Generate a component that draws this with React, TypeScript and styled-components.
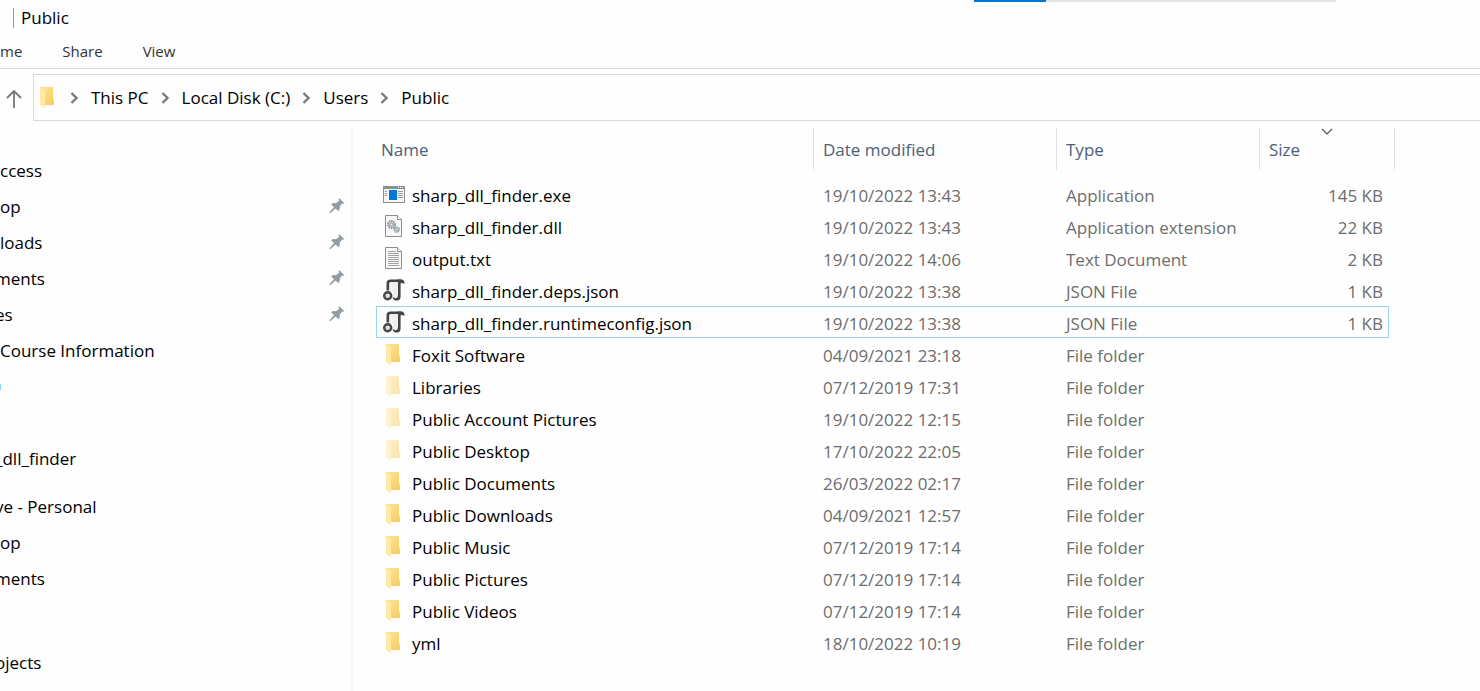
import React from "react";
import styled, { createGlobalStyle, css } from "styled-components";

const GlobalStyle = createGlobalStyle`
  *, *::before, *::after { box-sizing: border-box; }
  body {
    margin: 0;
    background: #fefefe;
    color: #000;
    font-family: "Open Sans", "Segoe UI", sans-serif;
    font-size: 17px;
    line-height: 24px;
  }
  button {
    font: inherit;
    color: inherit;
    background: none;
    border: 0;
    padding: 0;
  }
`;

const Window = styled.div`
  display: flex;
  flex-direction: column;
  min-height: 100vh;
  overflow: hidden;
`;

const ProgressStrip = styled.div`
  display: flex;
  justify-content: flex-end;
  height: 2px;
  padding-right: 144px;
`;

const ProgressTrack = styled.div`
  width: 362px;
  background: #e5e5e5;
`;

const ProgressFill = styled.div`
  width: 72px;
  height: 2px;
  background: #0078d7;
`;

const TitleBar = styled.header`
  display: flex;
  align-items: center;
  height: 32px;
  padding-left: 13px;
`;

const Title = styled.h1`
  margin: 0;
  padding-left: 7px;
  border-left: 1px solid #999;
  font-size: 17px;
  font-weight: 400;
  line-height: 20px;
`;

const Ribbon = styled.nav`
  display: flex;
  align-items: center;
  gap: 40px;
  height: 35px;
  border-bottom: 1px solid #dadbdc;
  color: #333;
  font-size: 15px;
`;

const AddressRow = styled.div`
  display: flex;
  align-items: center;
  padding-top: 5px;
`;

const UpButton = styled.button`
  display: flex;
  width: 33px;
  padding-left: 6px;
`;

const AddressBar = styled.nav`
  display: flex;
  flex: 1;
  align-items: center;
  height: 47px;
  padding-left: 6px;
  border: 1px solid #d9d9d9;
  border-right: 0;
`;

const Separator = styled.svg`
  margin: 0 12px;
`;

const Body = styled.div`
  display: flex;
  flex: 1;
  padding-top: 7px;
`;

const Sidebar = styled.nav`
  display: flex;
  flex-direction: column;
  flex: none;
  gap: 12px;
  width: 353px;
  padding: 25px 6px 0 0;
  border-right: 2px solid #f5f5f5;
`;

const NavGroup = styled.ul`
  margin: 0;
  padding: 0;
  list-style: none;
`;

const NavItem = styled.li`
  display: flex;
  align-items: center;
  justify-content: space-between;
  height: 36px;
`;

const NavLabel = styled.button<{ $clipped?: boolean }>`
  margin-left: ${(p) => (p.$clipped ? -5 : 0)}px;
`;

const Files = styled.main`
  flex: 1;
  padding-left: 23px;
`;

const Table = styled.table`
  width: 1019px;
  table-layout: fixed;
  border-collapse: separate;
  border-spacing: 0;
`;

const Column = styled.col<{ $width: number }>`
  width: ${(p) => p.$width}px;
`;

const HeadCell = styled.th<{ $first?: boolean }>`
  position: relative;
  height: 42px;
  padding: 2px 0 0 ${(p) => (p.$first ? 5 : 9)}px;
  border-right: 1px solid #e3e3e3;
  color: #4c607a;
  font-weight: 400;
  text-align: left;
`;

const SortMark = styled.svg`
  position: absolute;
  top: 0;
  left: 50%;
  transform: translateX(-50%);
`;

const Rows = styled.tbody`
  &::before {
    content: "";
    display: table-row;
    height: 8px;
  }
`;

const Cell = styled.td<{ $align?: "right" }>`
  height: 32px;
  padding: 4px 6px 0 9px;
  color: #6d6d6d;
  text-align: ${(p) => p.$align ?? "left"};
  white-space: nowrap;
`;

const NameCell = styled(Cell)`
  padding: 4px 7px 0;
  color: #000;
`;

const FileName = styled.span`
  display: flex;
  align-items: center;
  gap: 7px;
`;

const IconSlot = styled.span`
  display: flex;
  align-items: flex-start;
  width: 22px;
  height: 26px;
`;

const Row = styled.tr<{ $focused?: boolean }>`
  ${(p) =>
    p.$focused &&
    css`
      td:not(:last-child) {
        padding-top: 3px;
        border-top: 1px solid #99d1ff;
        border-bottom: 1px solid #99d1ff;
      }
      td:first-child {
        border-left: 1px solid #99d1ff;
        padding-left: 6px;
      }
      td:nth-last-child(2) {
        border-right: 1px solid #99d1ff;
        padding-right: 5px;
      }
    `}
`;

const FolderShape = ({ x = 0 }: { x?: number }) => (
  <g transform={`translate(${x} 0)`}>
    <path d="M0 0H13V11L14 13V18H4L0 17Z" fill="url(#folderBack)" />
    <path d="M0 0L5 3V21L0 18Z" fill="#ffe9a4" />
  </g>
);

const FolderIcon = () => (
  <svg width="22" height="24" viewBox="0 -1 22 24" aria-hidden="true">
    <FolderShape x={3} />
  </svg>
);

const FadedFolderIcon = () => (
  <svg width="22" height="24" viewBox="0 -1 22 24" opacity="0.5" aria-hidden="true">
    <FolderShape x={3} />
  </svg>
);

const ExeIcon = () => (
  <svg width="22" height="24" viewBox="0 0 22 24" aria-hidden="true">
    <rect x="0.5" y="3.5" width="21" height="16" fill="#f6f6f6" stroke="#8a8f92" />
    <path d="M0 3H22V6H0Z" fill="#8a8f92" />
    <path d="M15 4.5H16M17 4.5H18M19 4.5H20" stroke="#fff" />
    <rect x="6" y="7" width="8" height="10" fill="#0078d7" />
    <path d="M2 8.5H4M2 10.5H4M2 12.5H4M15 8.5H20M15 10.5H20M15 12.5H20M15 14.5H20" stroke="#999" />
  </svg>
);

const Page = () => (
  <>
    <path d="M2.5 0.5H14.5L18.5 4.5V21.5H2.5Z" fill="#f8f8f8" stroke="#8c8c8c" />
    <path d="M14.5 0.5V4.5H18.5" fill="#fff" stroke="#8c8c8c" />
  </>
);

const DllIcon = () => (
  <svg width="22" height="24" viewBox="0 0 22 24" aria-hidden="true">
    <Page />
    <circle cx="8.5" cy="9.5" r="3.6" fill="#c9d1d6" stroke="#87939a" strokeWidth="1.6" strokeDasharray="1.6 0.7" />
    <circle cx="8.5" cy="9.5" r="1.4" fill="#fff" stroke="#87939a" />
    <circle cx="13.7" cy="14.5" r="2.6" fill="#d3dadd" stroke="#87939a" strokeWidth="1.4" strokeDasharray="1.3 0.7" />
    <circle cx="13.7" cy="14.5" r="0.9" fill="#fff" stroke="#87939a" strokeWidth="0.8" />
  </svg>
);

const TextIcon = () => (
  <svg width="22" height="24" viewBox="0 0 22 24" aria-hidden="true">
    <Page />
    <path d="M5 4.5H13M5 6.5H16M5 8.5H16M5 10.5H16M5 12.5H16M5 14.5H16M5 16.5H16M5 18.5H16" stroke="#a2a2a2" />
  </svg>
);

const JsonIcon = () => (
  <svg width="22" height="24" viewBox="0 0 22 24" aria-hidden="true">
    <path d="M5 3H16V17L14 20H10V13H5Z" fill="#efefef" />
    <path
      d="M4.8 11.5V4.5Q4.8 1.7 7.6 1.7H18.5"
      fill="none"
      stroke="#454545"
      strokeWidth="2.6"
    />
    <path d="M14.5 0.4H18.5Q21.6 0.6 21.6 5Q19.8 3.8 17.6 4.2V17.5Q17.6 21.4 14 21.4H12.4Q9.8 21.2 9.6 17.6Q10.8 19.4 12.8 19.2Q15 19 15 16.5V4Z" fill="#454545" />
    <circle cx="4.7" cy="16.7" r="3.5" fill="#dedede" stroke="#454545" strokeWidth="2.4" />
  </svg>
);

const PinIcon = () => (
  <svg width="16" height="18" viewBox="0 0 16 18" aria-hidden="true">
    <path
      d="M10 0L15.5 5.2L14 5.7L13 5.5L10.8 8.6Q11.2 11 9.6 13.3L6.5 10.4L1.3 15.2L0.4 14.5L5 9L2 6.2Q4.3 4.6 7 5.3L10.2 2.7L9.7 1.2Z"
      fill="#929ca3"
    />
  </svg>
);

const CloudEdge = () => (
  <svg width="2" height="8" viewBox="0 0 2 8" aria-hidden="true">
    <path d="M0 1H1V7H0Z" fill="#8bd6fa" />
  </svg>
);

const CrumbSeparator = () => (
  <Separator width="9" height="12" viewBox="0 0 9 12" aria-hidden="true">
    <path d="M1.5 1L6.5 6L1.5 11" fill="none" stroke="#7a7a7a" strokeWidth="2.4" />
  </Separator>
);

const icons = {
  exe: ExeIcon,
  dll: DllIcon,
  text: TextIcon,
  json: JsonIcon,
  folder: FolderIcon,
  faded: FadedFolderIcon,
};

interface FileEntry {
  icon: keyof typeof icons;
  name: string;
  modified: string;
  type: string;
  size?: string;
  focused?: boolean;
}

const files: FileEntry[] = [
  { icon: "exe", name: "sharp_dll_finder.exe", modified: "19/10/2022 13:43", type: "Application", size: "145 KB" },
  { icon: "dll", name: "sharp_dll_finder.dll", modified: "19/10/2022 13:43", type: "Application extension", size: "22 KB" },
  { icon: "text", name: "output.txt", modified: "19/10/2022 14:06", type: "Text Document", size: "2 KB" },
  { icon: "json", name: "sharp_dll_finder.deps.json", modified: "19/10/2022 13:38", type: "JSON File", size: "1 KB" },
  { icon: "json", name: "sharp_dll_finder.runtimeconfig.json", modified: "19/10/2022 13:38", type: "JSON File", size: "1 KB", focused: true },
  { icon: "folder", name: "Foxit Software", modified: "04/09/2021 23:18", type: "File folder" },
  { icon: "faded", name: "Libraries", modified: "07/12/2019 17:31", type: "File folder" },
  { icon: "faded", name: "Public Account Pictures", modified: "19/10/2022 12:15", type: "File folder" },
  { icon: "faded", name: "Public Desktop", modified: "17/10/2022 22:05", type: "File folder" },
  { icon: "folder", name: "Public Documents", modified: "26/03/2022 02:17", type: "File folder" },
  { icon: "folder", name: "Public Downloads", modified: "04/09/2021 12:57", type: "File folder" },
  { icon: "folder", name: "Public Music", modified: "07/12/2019 17:14", type: "File folder" },
  { icon: "folder", name: "Public Pictures", modified: "07/12/2019 17:14", type: "File folder" },
  { icon: "folder", name: "Public Videos", modified: "07/12/2019 17:14", type: "File folder" },
  { icon: "folder", name: "yml", modified: "18/10/2022 10:19", type: "File folder" },
];

interface NavEntry {
  label?: string;
  pinned?: boolean;
  cloud?: boolean;
  clipped?: boolean;
}

const navGroups: NavEntry[][] = [
  [
    { label: "ccess" },
    { label: "op", pinned: true },
    { label: "loads", pinned: true },
    { label: "ments", pinned: true, clipped: true },
    { label: "es", pinned: true, clipped: true },
    { label: "Course Information" },
    { cloud: true },
    {},
    { label: "_dll_finder", clipped: true },
  ],
  [{ label: "ve - Personal", clipped: true }, { label: "op" }, { label: "ments", clipped: true }],
  [{}, { label: "ojects", clipped: true }],
];

const crumbs = ["This PC", "Local Disk (C:)", "Users", "Public"];

export default function App() {
  return (
    <Window>
      <GlobalStyle />
      <svg width="0" height="0" style={{ position: "absolute" }} aria-hidden="true">
        <defs>
          <linearGradient id="folderBack" x1="0" y1="0" x2="1" y2="1">
            <stop offset="0.2" stopColor="#ffe08a" />
            <stop offset="1" stopColor="#f3cd62" />
          </linearGradient>
        </defs>
      </svg>
      <ProgressStrip>
        <ProgressTrack>
          <ProgressFill />
        </ProgressTrack>
      </ProgressStrip>
      <TitleBar>
        <Title>Public</Title>
      </TitleBar>
      <Ribbon aria-label="Ribbon">
        <button type="button">me</button>
        <button type="button">Share</button>
        <button type="button">View</button>
      </Ribbon>
      <AddressRow>
        <UpButton type="button" aria-label="Up">
          <svg width="16" height="20" viewBox="0 0 16 20" aria-hidden="true">
            <path d="M8 20V3M1 10L8 3L15 10" fill="none" stroke="#777" strokeWidth="1.8" />
          </svg>
        </UpButton>
        <AddressBar aria-label="Address">
          <svg width="18" height="22" viewBox="0 0 18 22" aria-hidden="true">
            <FolderShape />
          </svg>
          {crumbs.map((crumb) => (
            <React.Fragment key={crumb}>
              <CrumbSeparator />
              <button type="button">{crumb}</button>
            </React.Fragment>
          ))}
        </AddressBar>
      </AddressRow>
      <Body>
        <Sidebar aria-label="Folders">
          {navGroups.map((group, g) => (
            <NavGroup key={g}>
              {group.map((item, i) => (
                <NavItem key={i}>
                  {item.label && (
                    <NavLabel type="button" $clipped={item.clipped}>
                      {item.label}
                    </NavLabel>
                  )}
                  {item.cloud && <CloudEdge />}
                  {item.pinned && <PinIcon />}
                </NavItem>
              ))}
            </NavGroup>
          ))}
        </Sidebar>
        <Files>
          <Table>
            <colgroup>
              <Column $width={438} />
              <Column $width={243} />
              <Column $width={203} />
              <Column $width={129} />
              <Column $width={6} />
            </colgroup>
            <thead>
              <tr>
                <HeadCell $first>
                  <button type="button">Name</button>
                </HeadCell>
                <HeadCell>
                  <button type="button">Date modified</button>
                </HeadCell>
                <HeadCell>
                  <button type="button">Type</button>
                </HeadCell>
                <HeadCell colSpan={2} aria-sort="descending">
                  <button type="button">Size</button>
                  <SortMark width="12" height="7" viewBox="0 0 12 7" aria-hidden="true">
                    <path d="M1 1L6 6L11 1" fill="none" stroke="#555" strokeWidth="1.2" />
                  </SortMark>
                </HeadCell>
              </tr>
            </thead>
            <Rows>
              {files.map((file) => {
                const Icon = icons[file.icon];
                return (
                  <Row key={file.name} $focused={file.focused}>
                    <NameCell>
                      <FileName>
                        <IconSlot>
                          <Icon />
                        </IconSlot>
                        {file.name}
                      </FileName>
                    </NameCell>
                    <Cell>{file.modified}</Cell>
                    <Cell>{file.type}</Cell>
                    <Cell $align="right">{file.size}</Cell>
                    <td />
                  </Row>
                );
              })}
            </Rows>
          </Table>
        </Files>
      </Body>
    </Window>
  );
}
